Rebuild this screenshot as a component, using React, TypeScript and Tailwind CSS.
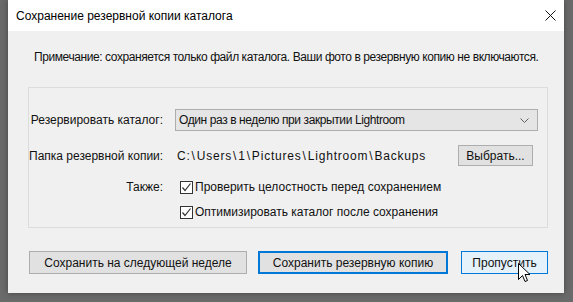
import React from "react";

function CloseIcon() {
  return (
    <svg width="11" height="11" viewBox="0 0 11 11" className="block">
      <path d="M0.5 0.5 L10.5 10.5 M10.5 0.5 L0.5 10.5" stroke="#111" strokeWidth="1" fill="none" />
    </svg>
  );
}

function Chevron() {
  return (
    <svg width="9" height="5" viewBox="0 0 9 5" className="block">
      <path d="M0.5 0.5 L4.5 4.5 L8.5 0.5" stroke="#606060" strokeWidth="1" fill="none" />
    </svg>
  );
}

function Checkbox() {
  return (
    <span className="flex h-[13px] w-[13px] items-center justify-center border border-[#333] bg-white">
      <svg width="11" height="11" viewBox="0 0 11 11" className="block">
        <path d="M1.5 5.5 L4 8.5 L9.5 1.5" stroke="#333" strokeWidth="1.2" fill="none" />
      </svg>
    </span>
  );
}

function Cursor() {
  return (
    <svg width="13" height="21" viewBox="0 0 13 21" className="absolute left-[518px] top-[263px]">
      <path
        d="M0.5 0.5 L0.5 16.5 L4.5 12.5 L7 18.5 L9.5 17.5 L7 11.5 L12 11.5 Z"
        fill="#fff"
        stroke="#000"
        strokeWidth="1"
        strokeLinejoin="miter"
      />
    </svg>
  );
}

const pathParts = ["C:", "Users", "1", "Pictures", "Lightroom", "Backups"];

export default function App() {
  return (
    <div
      className="relative h-[302px] w-[573px] overflow-hidden whitespace-nowrap bg-[#6a6a6a] pl-[8px] text-[12px] text-[#111]"
      style={{ fontFamily: '"Liberation Sans", Arial, sans-serif' }}
    >
      <div className="flex h-[293px] w-[556px] flex-col bg-[#f0f0f0] shadow-[0_0_6px_rgba(0,0,0,0.35)]">
        <div className="flex h-[31px] items-center justify-between bg-white pl-[8px] pr-[8px]">
          <span className="text-[12px] text-black">Сохранение резервной копии каталога</span>
          <CloseIcon />
        </div>

        <div className="pl-[26px] pt-[18px] leading-[17px] tracking-[-0.42px]">
          Примечание: сохраняется только файл каталога. Ваши фото в резервную копию не включаются.
        </div>

        <div className="ml-[20px] mt-[21px] h-[141px] w-[520px] border border-[#dcdcdc] pt-[21px]">
          <div className="flex h-[22px] items-center">
            <span className="w-[140px] pr-[6px] text-right">Резервировать каталог:</span>
            <div className="ml-[6px] flex h-[22px] w-[363px] items-center justify-between border border-[#adadad] bg-[#e5e5e5] pl-[3px] pr-[8px]">
              <span className="tracking-[-0.4px]">Один раз в неделю при закрытии Lightroom</span>
              <Chevron />
            </div>
          </div>

          <div className="mt-[14px] flex h-[21px] items-center">
            <span className="w-[140px] pr-[6px] text-right">Папка резервной копии:</span>
            <span className="ml-[8px] w-[280px] tracking-[0.8px]">
              {pathParts.map((p, i) => (
                <React.Fragment key={i}>
                  {i > 0 && <span className="px-[1px]">\</span>}
                  {p}
                </React.Fragment>
              ))}
            </span>
            <div className="ml-[1px] flex h-[21px] w-[75px] items-center justify-center border border-[#adadad] bg-[#e1e1e1]">
              Выбрать...
            </div>
          </div>

          <div className="mt-[13px] flex h-[16px] items-center">
            <span className="w-[140px] pr-[6px] text-right">Также:</span>
            <span className="ml-[11px]"><Checkbox /></span>
            <span className="ml-[2px]">Проверить целостность перед сохранением</span>
          </div>

          <div className="mt-[9px] flex h-[16px] items-center">
            <span className="w-[140px]" />
            <span className="ml-[11px]"><Checkbox /></span>
            <span className="ml-[2px]">Оптимизировать каталог после сохранения</span>
          </div>
        </div>

        <div className="ml-[21px] mt-[23px] flex h-[23px] items-stretch">
          <div className="flex w-[218px] items-center justify-center border border-[#adadad] bg-[#e1e1e1]">
            Сохранить на следующей неделе
          </div>
          <div className="ml-[11px] flex w-[190px] items-center justify-center border-2 border-[#0078d7] bg-[#e1e1e1]">
            Сохранить резервную копию
          </div>
          <div className="ml-[13px] flex w-[87px] items-center justify-center border border-[#0078d7] bg-[#e5f1fb]">
            Пропустить
          </div>
        </div>
      </div>
      <Cursor />
    </div>
  );
}
